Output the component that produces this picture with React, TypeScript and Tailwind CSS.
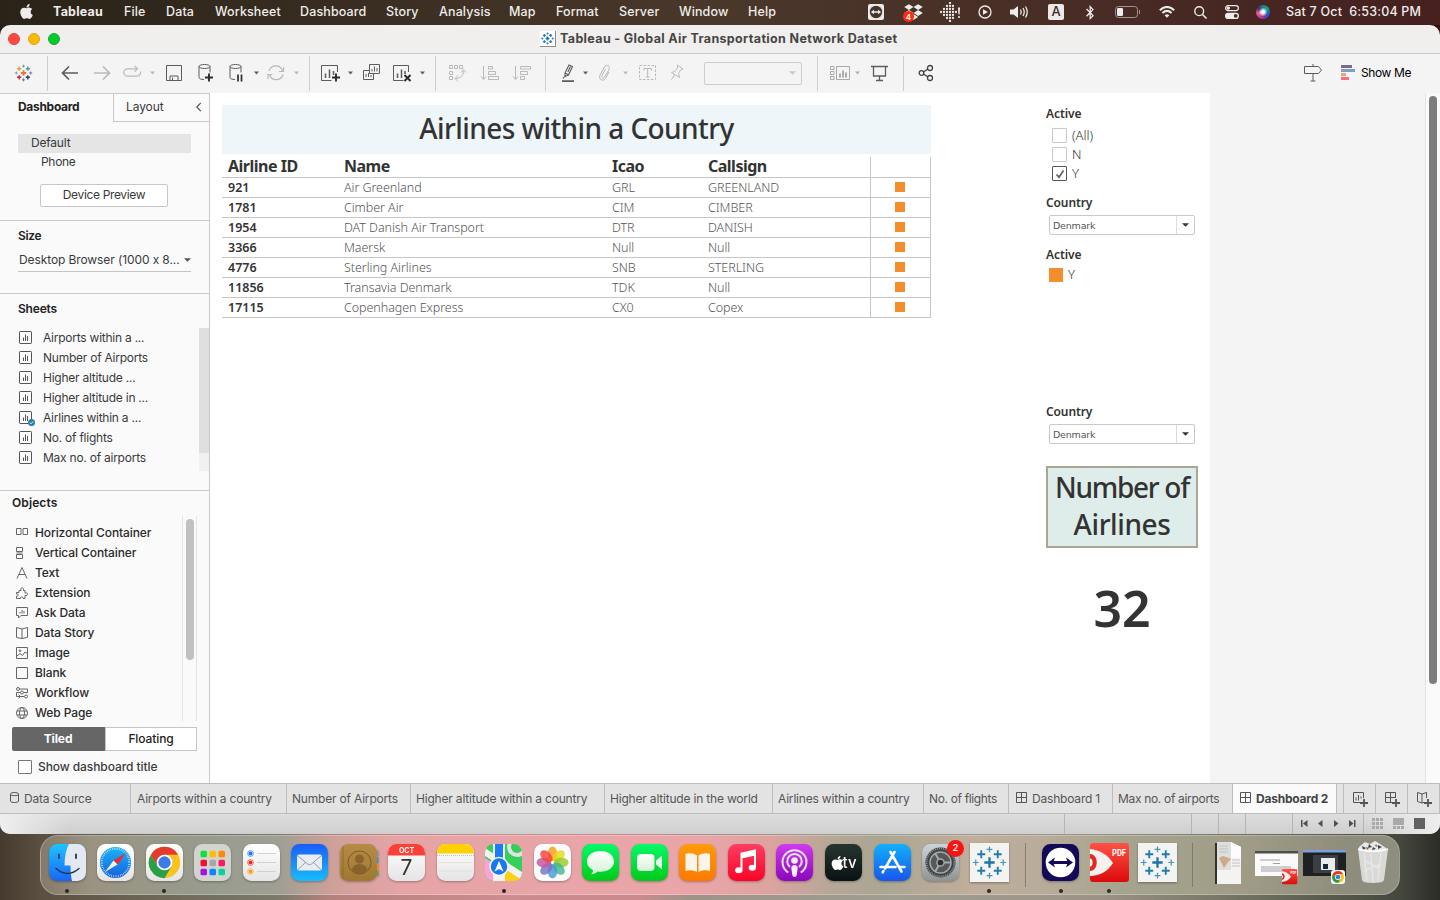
import React, { ReactNode } from "react";
import { FaApple, FaBluetoothB, FaDropbox } from "react-icons/fa";

type IconProps = { children: ReactNode; className?: string; box?: string };

function Ico({ children, className = "", box = "0 0 20 20" }: IconProps) {
  return (
    <svg
      viewBox={box}
      className={`shrink-0 overflow-visible ${className}`}
      fill="none"
      stroke="currentColor"
      strokeWidth="1"
    >
      {children}
    </svg>
  );
}

function Caret({ className }: { className: string }) {
  return (
    <svg viewBox="0 0 5 4" className={`h-1 w-[5px] shrink-0 ${className}`} fill="currentColor">
      <path d="M0 .5h5L2.5 3.5z" />
    </svg>
  );
}

const Sep = ({ className }: { className: string }) => (
  <div className={`h-[35px] w-px shrink-0 bg-[#cfcfcf] ${className}`} />
);

/* ---------- menu bar ---------- */

const menus: [string, string][] = [
  ["File", "w-[42px]"],
  ["Data", "w-[49px]"],
  ["Worksheet", "w-[85px]"],
  ["Dashboard", "w-[86px]"],
  ["Story", "w-[53px]"],
  ["Analysis", "w-[70px]"],
  ["Map", "w-[47px]"],
  ["Format", "w-[63px]"],
  ["Server", "w-[60px]"],
  ["Window", "w-[69px]"],
  ["Help", "w-[40px]"],
];

function MenuBar() {
  return (
    <div className="flex h-[25px] items-center bg-gradient-to-r from-[#2a2318] via-[#4a382b] to-[#45201f] pb-px font-['Inter',sans-serif] text-[12.5px] font-medium tracking-[0.13px] whitespace-nowrap text-[#efedeb]">
      <FaApple className="mb-[2px] ml-[19px] h-[17px] w-[15px]" />
      <span className="ml-[19px] w-[71px] font-bold tracking-[0.2px]">Tableau</span>
      {menus.map(([m, w]) => (
        <span key={m} className={`shrink-0 ${w}`}>{m}</span>
      ))}
      <svg viewBox="0 0 16 16" className="ml-20 h-4 w-4 shrink-0">
        <rect width="16" height="16" rx="2" fill="#eceae8" />
        <circle cx="8" cy="8" r="6.2" fill="#46352b" />
        <path d="M2.800 8 6 5.700v1.500h4V5.700L13.200 8 10 10.300V8.800H6v1.500z" fill="#eceae8" />
      </svg>
      <div className="relative ml-[18px] h-5 w-[22px] shrink-0">
        <FaDropbox className="absolute top-px left-[2px] h-[18px] w-[19px]" />
        <span className="absolute top-[9px] left-px flex h-[11px] w-[11px] items-center justify-center rounded-full bg-[#ff2a10] text-[8px] font-semibold text-white">
          4
        </span>
      </div>
      <svg viewBox="0 0 21 20" className="ml-4 h-5 w-[21px] shrink-0" fill="#eceae8">
        {[[1, 10], [4, 10], [4, 7], [4, 13], [7, 4], [7, 7], [7, 10], [7, 13], [7, 16], [10, 1], [10, 4], [10, 7], [10, 10], [10, 13], [10, 16], [10, 19], [13, 4], [13, 7], [13, 10], [13, 13], [13, 16], [16, 10]].map(
          ([x, y]) => <circle key={`${x}-${y}`} cx={x} cy={y} r="1.150" />,
        )}
        <path d="M18 5.500h2l-.4 7h-1.200z" />
        <circle cx="19" cy="15" r="1.100" />
      </svg>
      <Ico className="ml-[17px] h-[14px] w-[14px]" box="0 0 14 14">
        <circle cx="7" cy="7" r="6" strokeWidth="1.300" />
        <path d="M5 4.200v5.600L10 7z" fill="currentColor" stroke="none" />
      </Ico>
      <Ico className="ml-[18px] h-[14px] w-[18px]" box="0 0 18 14">
        <path d="M0 4.500h3.500L8 1v12L3.500 9.500H0z" fill="currentColor" stroke="none" />
        <path d="M10.500 4.500q1.500 2.500 0 5M13 3q2.500 4 0 8M15.500 1.500q3.500 5.500 0 11" strokeWidth="1.300" />
      </Ico>
      <span className="ml-[20px] flex h-4 w-4 shrink-0 items-center justify-center rounded-[2px] bg-[#eceae8] text-[13px] tracking-normal text-[#3f2b26]">A</span>
      <FaBluetoothB className="ml-[19px] h-[15px] w-[14px] shrink-0" />
      <Ico className="ml-[18px] h-3 w-[26px]" box="0 0 26 12">
        <rect x=".5" y=".5" width="22" height="11" rx="3" stroke="#a3948f" />
        <rect x="2" y="2" width="6" height="8" rx="1.200" fill="currentColor" stroke="none" />
        <path d="M24.500 4v4" stroke="#a3948f" />
      </Ico>
      <svg viewBox="0 0 16 12" className="ml-[18px] h-3 w-4 shrink-0" fill="none" stroke="#eceae8" strokeWidth="2">
        <path d="M.8 4.200q7.200-6.500 14.400 0M3.400 7q4.600-4.200 9.200 0" />
        <path d="M8 11.700 5.600 9.200q2.400-1.800 4.800 0z" fill="#eceae8" stroke="none" />
      </svg>
      <Ico className="ml-[19px] h-[13px] w-[13px]" box="0 0 13 13">
        <circle cx="5.200" cy="5.200" r="4.400" strokeWidth="1.400" />
        <path d="M8.500 8.500l4 4" strokeWidth="1.600" />
      </Ico>
      <Ico className="ml-[18px] h-[14px] w-[14px]" box="0 0 14 14">
        <rect x=".6" y=".6" width="12.800" height="5" rx="2.500" strokeWidth="1.200" />
        <circle cx="3.300" cy="3.100" r="1.700" fill="currentColor" stroke="none" />
        <rect x="0" y="7.700" width="14" height="6.300" rx="3.100" fill="currentColor" stroke="none" />
        <circle cx="10.700" cy="10.850" r="1.900" fill="#4a2b27" stroke="none" />
      </Ico>
      <div className="ml-[17px] h-[14px] w-[14px] shrink-0 rounded-full bg-[radial-gradient(circle_at_50%_50%,#ffffff_0_14%,transparent_45%),conic-gradient(#1f7f93,#12a58c,#1d5fb8,#5a3fc0,#d6348c,#f0608c,#4a2a80,#1f7f93)]" />
      <span className="ml-4 tracking-[0.2px] whitespace-pre">Sat 7 Oct  6:53:04 PM</span>
    </div>
  );
}

/* ---------- title bar and toolbar ---------- */

function Plus({ x, y, s, c, w = 1.2 }: { x: number; y: number; s: number; c: string; w?: number }) {
  return <path d={`M${x - s} ${y}h${2 * s}M${x} ${y - s}v${2 * s}`} stroke={c} strokeWidth={w} />;
}

function TableauMark({ colors, w = 1 }: { colors: string[]; w?: number }) {
  return (
    <g>
      <Plus x={10} y={10} s={3} c={colors[0]} w={1.5 * w} />
      <Plus x={5.2} y={5.2} s={2.3} c={colors[1]} w={1.2 * w} />
      <Plus x={14.8} y={5.2} s={2.3} c={colors[2]} w={1.2 * w} />
      <Plus x={5.2} y={14.8} s={2.3} c={colors[3]} w={1.2 * w} />
      <Plus x={14.8} y={14.8} s={2.3} c={colors[4]} w={1.2 * w} />
      <Plus x={10} y={2.4} s={1.7} c={colors[5]} w={0.8 * w} />
      <Plus x={10} y={17.6} s={1.7} c={colors[6]} w={0.8 * w} />
      <Plus x={2} y={10} s={1.7} c={colors[5]} w={0.8 * w} />
      <Plus x={18} y={10} s={1.7} c={colors[6]} w={0.8 * w} />
    </g>
  );
}

const blue = ["#1b75ab", "#2a7fb2", "#2a7fb2", "#2a7fb2", "#2a7fb2", "#2a7fb2", "#2a7fb2"];

function TitleBar() {
  return (
    <div className="flex h-[29px] shrink-0 items-center border-b border-[#cbcbcb] bg-[#f0efed]">
      <div className="ml-2 flex gap-2">
        <span className="h-3 w-3 rounded-full border border-[#e0443e] bg-[#ff4741]" />
        <span className="h-3 w-3 rounded-full border border-[#dea123] bg-[#fdb900]" />
        <span className="h-3 w-3 rounded-full border border-[#1aab29] bg-[#00cb2d]" />
      </div>
      <div className="mb-px ml-[480px] h-4 w-4 shrink-0 border-r border-b border-[#8d8d8d] bg-white p-px">
        <svg viewBox="0 0 20 20" className="h-full w-full">
          <TableauMark colors={blue} w={1.700} />
        </svg>
      </div>
      <span className="ml-1 font-['Inter',sans-serif] text-[12.5px] font-bold tracking-[0.35px] whitespace-nowrap text-[#464544]">
        Tableau - Global Air Transportation Network Dataset
      </span>
    </div>
  );
}

function Toolbar() {
  const d = "text-[#5c5c5c]";
  const l = "text-[#b9b9b9]";
  return (
    <div className="flex h-[39px] shrink-0 items-center bg-[#f4f4f4] pb-px">
      <svg viewBox="0 0 20 20" className="ml-[14px] h-[18px] w-[19px] shrink-0">
        <TableauMark colors={["#e8762d", "#eb9a3c", "#5c8ea8", "#c8203f", "#1f457e", "#7a9aa8", "#6a6a9a"]} w={1.300} />
      </svg>
      <Sep className="ml-[14px]" />
      <Ico className={`ml-3 h-5 w-5 ${d}`}>
        <path d="M18 10H3M9 3.500 2.500 10 9 16.500" strokeWidth="1.700" />
      </Ico>
      <Ico className={`ml-3 h-5 w-5 ${l}`}>
        <path d="M2 10h15M11 3.500l6.500 6.500-6.500 6.500" strokeWidth="1.700" />
      </Ico>
      <Ico className={`ml-[10px] h-5 w-5 ${l}`}>
        <path d="M15 5.800H5.500a3.700 3.700 0 0 0 0 7.400h9.500a3.700 3.700 0 0 0 3.500-4.700M12.500 2.800l3 3-3 3" strokeWidth="1.200" />
      </Ico>
      <Caret className="ml-2 text-[#b9b9b9]" />
      <Ico className={`ml-[9px] h-5 w-5 ${d}`}>
        <path d="M2.500 2.500h15v15h-15zM6 17.500v-4.500h8v4.500M8.500 17.500V14.500" />
      </Ico>
      <Ico className={`ml-3 h-5 w-5 ${d}`}>
        <ellipse cx="8.500" cy="3.500" rx="5.500" ry="2" />
        <path d="M3 3.500v11c0 1.200 2 2 5 2M14 3.500v6" />
        <path d="M9 14.500h8M13 10.500v8" stroke="#2c2c2c" strokeWidth="1.900" />
      </Ico>
      <Ico className={`ml-[10px] h-5 w-5 ${d}`}>
        <ellipse cx="9.500" cy="3.500" rx="5.500" ry="2" />
        <path d="M4 3.500v11c0 1.200 2 2 5 2M15 3.500v6" />
        <path d="M12 11.500v7M15.500 11.500v7" stroke="#2c2c2c" strokeWidth="1.700" />
      </Ico>
      <Caret className="ml-2 text-[#5c5c5c]" />
      <Ico className={`ml-[7px] h-5 w-5 ${l}`}>
        <path d="M3 8a7 7 0 0 1 13.500 0M17 11.500a7 7 0 0 1-13.500 0M17.500 4v4.500h-4.500M2 16v-4.500h4.500" strokeWidth="1.200" />
      </Ico>
      <Caret className="ml-2 text-[#b9b9b9]" />
      <Sep className="ml-[10px]" />
      <Ico className={`ml-[10px] h-5 w-5 ${d}`}>
        <path d="M17.500 9V2.500h-16v15h10" />
        <path d="M5.500 10.500v4.500M9.500 6.500v8.500M13.500 8v4" strokeWidth="1.500" />
        <path d="M12 14.500h8M16 10.500v8" stroke="#2c2c2c" strokeWidth="1.900" />
      </Ico>
      <Caret className="ml-2 text-[#5c5c5c]" />
      <Ico className={`ml-[9px] h-5 w-5 ${d}`}>
        <path d="M7.500 1.500h10v9h-10zM7 7.500H1.500v9h10v-5.500M10 8.500V6M12.500 8.500V3.500M15 8.500V5M4 14v-3M6.500 14v-4M9 14v-2" />
      </Ico>
      <Ico className={`ml-[10px] h-5 w-5 ${d}`}>
        <path d="M16.500 9V2.500h-15v15h10" />
        <path d="M5.500 10.500v4.500M9.500 6.500v8.500M13 8v3" strokeWidth="1.500" />
        <path d="M12.500 12l6 6M18.500 12l-6 6" stroke="#2c2c2c" strokeWidth="2" />
      </Ico>
      <Caret className="ml-2 text-[#5c5c5c]" />
      <Sep className="ml-[10px]" />
      <Ico className={`ml-[11px] h-5 w-5 ${l}`}>
        <path d="M2.500 2.500h3v3h-3zM7.500 2.500h3v3h-3zM12.500 2.500h3v3h-3zM2.500 8.500h3v3h-3zM2.500 13.500h3v3h-3zM16.500 8c0 5-3 7.500-8 7.500M11 12.500l-3 3 3 3M14 9.500l2.500-3 2.500 3" />
      </Ico>
      <Ico className={`ml-[13px] h-5 w-5 ${l}`}>
        <path d="M3.500 3v13M1 13.500l2.500 3 2.500-3M8.500 3.500h4v2.500h-4zM8.500 8.500h7v3h-7zM8.500 13.500h10v3h-10z" />
      </Ico>
      <Ico className={`ml-3 h-5 w-5 ${l}`}>
        <path d="M3.500 3v13M1 13.500l2.500 3 2.500-3M8.500 3.500h10v2.500h-10zM8.500 8.500h7v3h-7zM8.500 13.500h4v3h-4z" />
      </Ico>
      <Sep className="ml-[13px]" />
      <Ico className={`ml-3 h-5 w-5 ${d}`}>
        <path d="M7 10l4-8 3.500 1.500-4 8.500-3.500 1.500zM6.500 13.500 5 15.500M7 10l4 2M9.800 9l2.700-5.500" strokeWidth="1.100" />
        <path d="M4 18.200h12" strokeWidth="1.800" />
      </Ico>
      <Caret className="ml-[5px] text-[#5c5c5c]" />
      <Ico className={`ml-[7px] h-5 w-5 ${l}`}>
        <path d="M10.500 6 7 12.500c-1 2.500 1.500 3.500 2.800 1.500L14 6.500c1.500-3.500-2.500-5.500-4.500-2.500L5 12c-2 4.500 3 7 5.500 3.500L14 9" />
      </Ico>
      <Caret className="ml-2 text-[#b9b9b9]" />
      <Ico className={`ml-[10px] h-5 w-5 ${l}`}>
        <rect x="1.500" y="2.500" width="16" height="14" strokeDasharray="2.500 1.500" />
        <path d="M6 7.500V5.500h7.500v2M9.700 5.500v8.500M8 14h3.500" />
      </Ico>
      <Ico className={`ml-[9px] h-5 w-5 ${l}`}>
        <path d="M10.500 2l5.500 4-2.500 1-2 3.500 1 4-8-5 3-1 3-3.500zM7.500 12 4.500 16.500" />
      </Ico>
      <div className="ml-[17px] flex h-[23px] w-[98px] shrink-0 items-center justify-end rounded-[2px] border border-[#cdcdcd] pr-[5px]">
        <svg viewBox="0 0 8 4" className="h-1 w-[7px]" fill="#c8c8c8"><path d="M0 0h8L4 4z" /></svg>
      </div>
      <Sep className="ml-[15px]" />
      <Ico className="ml-3 h-5 w-5 text-[#a9a9a9]">
        <path d="M.5 3.500h3.500v3H.5zM.5 8.500h3.500v3H.5zM.5 13.500h3.500v3H.5zM6.500 3.500h13v13h-13z" />
        <path d="M10 10.500v4M13 7.500v7M16 9.500v5" strokeWidth="1.900" />
      </Ico>
      <Caret className="ml-[5px] text-[#b0b0b0]" />
      <Ico className={`ml-[10px] h-5 w-5 ${d}`}>
        <path d="M1 3.500h17M3.500 4v9h12V4M9.500 13v4.500M6 17.500h7" strokeWidth="1.300" />
      </Ico>
      <Sep className="ml-[13px]" />
      <Ico className="ml-3 h-5 w-5 text-[#444]">
        <circle cx="5.500" cy="10" r="2.300" strokeWidth="1.300" />
        <circle cx="14" cy="5" r="2.500" strokeWidth="1.300" />
        <circle cx="14" cy="15" r="2.500" strokeWidth="1.300" />
        <path d="M7.500 9l4.500-3M7.500 11l4.500 3" strokeWidth="1.300" />
      </Ico>
      <Ico className={`ml-auto h-5 w-5 ${d}`}>
        <path d="M1.500 3.500h14l3 3.500-3 3.500h-14zM10 1v2.500M10 10.500V18M7.500 18h5" />
      </Ico>
      <svg viewBox="0 0 14 16" className="ml-[18px] h-4 w-[14px] shrink-0">
        <path d="M0 0h11v3H0z" fill="#7b6a94" />
        <path d="M0 4h14v3H0z" fill="#7ba0cc" />
        <path d="M0 8h5v3H0z" fill="#f2a07c" />
        <path d="M0 12h8v3H0z" fill="#fa6b7d" />
      </svg>
      <span className="mr-7 ml-1.5 w-[51px] shrink-0 font-['Inter',sans-serif] text-[12px] tracking-[-0.4px] whitespace-nowrap text-black">Show Me</span>
    </div>
  );
}

/* ---------- sidebar ---------- */

const sheets = [
  "Airports within a ...",
  "Number of Airports",
  "Higher altitude ...",
  "Higher altitude in ...",
  "Airlines within a ...",
  "No. of flights",
  "Max no. of airports",
];

const objects: [string, ReactNode][] = [
  ["Horizontal Container", <path d="M.5 1.500h4.500v6H.5zM7 1.500h4.500v6H7z" />],
  ["Vertical Container", <path d="M.5.500h6v4h-6zM.5 7.500h6v4h-6zM.5 6h6" />],
  ["Text", <path d="M1 11.500 6 .5l5 11M2.800 7.500h6.400" />],
  ["Extension", <path d="M.5 5.500H3V3.500h2C4-.3 8.300-.3 7.300 3.500H9v2.500c3.500-1 3.500 3.500 0 2.500v3H7c0-2.300-2.500-2.300-2.500 0h-4V9c2.500.5 2.500-2.500 0-2z" />],
  ["Ask Data", <path d="M.5.500h11v8H5L2.500 11V8.500h-2zM4 6.500V5M6 6.500V3M8 6.500V4" />],
  ["Data Story", <path d="M6 2 .5.500v10L6 11.500l5.500-1V.500zM6 2v9.500" />],
  ["Image", <g><path d="M.5.500h11v11H.5zM1 9l3-2.500 2.500 2L9 5l2.500 1.500" /><circle cx="4" cy="3.700" r=".9" /></g>],
  ["Blank", <path d="M.5.500h11v11H.5z" />],
  ["Workflow", <g><circle cx="2" cy="2" r="1.500" /><circle cx="10" cy="9.500" r="1.500" /><circle cx="6" cy="5.500" r="1.500" /><path d="M3.500 2h8v3.500h-4M4.500 5.500h-4v4H8M2.500 7.500l2 2-2 2" /></g>],
  ["Web Page", <g><circle cx="6" cy="6" r="5.500" /><ellipse cx="6" cy="6" rx="2.500" ry="5.500" /><path d="M1 4h10M1 8h10" /></g>],
];

function Sidebar() {
  return (
    <aside className="flex w-[210px] shrink-0 flex-col border-t border-r border-[#c9c9c9] bg-[#fafafa] font-['Inter',sans-serif] text-[12px] tracking-[-0.1px] whitespace-nowrap text-[#3a3a3a]">
      <div className="flex h-7 shrink-0">
        <div className="w-[113px] pt-[5px] pl-[18px] leading-4 font-bold tracking-[-0.3px] text-[#222]">Dashboard</div>
        <div className="flex flex-1 justify-between border-b border-l border-[#c9c9c9] pt-[5px] pr-2 pl-3 leading-4">
          <span>Layout</span>
          <Ico className="mt-[3px] h-[10px] w-[5px] text-[#555]" box="0 0 5 10">
            <path d="M4.800.800.800 5l4 4.200" strokeWidth="1.200" />
          </Ico>
        </div>
      </div>
      <div className="mt-3 ml-[18px] h-[19px] w-[173px] shrink-0 bg-[#e5e5e5] pl-[13px] leading-[18px] tracking-[-0.2px]">Default</div>
      <div className="h-[19px] shrink-0 pl-[41px] leading-[18px] tracking-[-0.3px]">Phone</div>
      <button className="mt-3 ml-10 flex h-[23px] w-32 shrink-0 items-center justify-center rounded-[2px] border border-[#c6c6c6] bg-white pb-[2px] tracking-[-0.35px]">
        Device Preview
      </button>
      <div className="mt-[13px] h-[73px] shrink-0 border-t border-[#c9c9c9] pt-[7px] pl-[18px]">
        <div className="leading-4 font-semibold tracking-[-0.3px] text-[#222]">Size</div>
        <div className="mt-[6px] flex h-[22px] w-[173px] items-center justify-between border-b border-[#c6c6c6] pb-[2px] pl-px">
          <span>Desktop Browser (1000 x 8...</span>
          <svg viewBox="0 0 8 4" className="h-1 w-[7px]" fill="#555"><path d="M0 0h8L4 4z" /></svg>
        </div>
      </div>
      <div className="h-[197px] shrink-0 border-t border-[#c9c9c9] pt-[7px]">
        <div className="pl-[18px] leading-4 font-semibold tracking-[-0.2px] text-[#222]">Sheets</div>
        <div className="mt-[11px] flex justify-between">
          <div className="pl-[19px]">
            {sheets.map((s, i) => (
              <div key={s} className="flex h-5 items-center gap-[11px]">
                <div className="relative mb-px h-[13px] w-[13px]">
                  <Ico className="block h-[13px] w-[13px] text-[#555]" box="0 0 13 13">
                    <rect x=".5" y=".5" width="12" height="12" rx=".7" />
                    <path d="M4.500 6.500V10M6.500 3.500V10M8.500 5V10" />
                  </Ico>
                  {i === 4 && (
                    <svg viewBox="0 0 8 8" className="absolute top-2 left-[9px] h-[7px] w-[7px]">
                      <circle cx="4" cy="4" r="4" fill="#2a7fa8" />
                      <path d="M2 4l1.500 1.500L6 2.800" fill="none" stroke="#fff" />
                    </svg>
                  )}
                </div>
                <span className="tracking-[-0.24px]">{s}</span>
              </div>
            ))}
          </div>
          <div className="h-[143px] w-[10px] bg-[#f1f1f1]">
            <div className="h-[125px] bg-[#dfdfdf]" />
          </div>
        </div>
      </div>
      <div className="flex-1 border-t border-[#c9c9c9] pt-1">
        <div className="pl-3 leading-4 font-semibold tracking-[0.1px] text-[#222]">Objects</div>
        <div className="mt-[5px] flex h-[205px] justify-between pr-3 font-medium tracking-[-0.1px]">
          <div className="pt-[7px] pl-4">
            {objects.map(([name, icon]) => (
              <div key={name} className="flex h-5 items-center gap-[7px]">
                <Ico className="h-3 w-3 text-[#666]" box="0 0 12 12">{icon}</Ico>
                <span className="text-[#2b2b2b]">{name}</span>
              </div>
            ))}
          </div>
          <div className="flex w-[15px] justify-center border-x border-[#e4e4e4] pt-[3px]">
            <div className="h-[141px] w-2 rounded-full bg-[#c1c1c1]" />
          </div>
        </div>
        <div className="mt-[6px] ml-3 flex h-6 w-[185px] font-medium">
          <div className="flex w-[93px] items-center justify-center rounded-l-[2px] bg-[#666] pr-px font-bold text-white">Tiled</div>
          <div className="flex flex-1 items-center justify-center border border-[#c6c6c6] bg-white text-[#222]">Floating</div>
        </div>
        <div className="mt-2 ml-[18px] flex items-center gap-[6px] font-medium tracking-[-0.08px]">
          <span className="h-[14px] w-[14px] rounded-[1px] border border-[#777] bg-white" />
          <span className="leading-4">Show dashboard title</span>
        </div>
      </div>
    </aside>
  );
}

/* ---------- dashboard ---------- */

const rows = [
  ["921", "Air Greenland", "GRL", "GREENLAND"],
  ["1781", "Cimber Air", "CIM", "CIMBER"],
  ["1954", "DAT Danish Air Transport", "DTR", "DANISH"],
  ["3366", "Maersk", "Null", "Null"],
  ["4776", "Sterling Airlines", "SNB", "STERLING"],
  ["11856", "Transavia Denmark", "TDK", "Null"],
  ["17115", "Copenhagen Express", "CX0", "Copex"],
];

function AirlineTable() {
  return (
    <section className="w-[709px]">
      <h1 className="flex h-[49px] items-center justify-center bg-[#eef6fa] pb-1 text-[28px] font-medium tracking-[-0.58px] text-[#333]">
        Airlines within a Country
      </h1>
      <div className="grid h-6 grid-cols-[122px_268px_96px_162px_61px] border-b border-[#c6c6c6] text-[16px] leading-[25px] font-bold tracking-[-0.5px] text-[#333]">
        <span className="pl-1.5">Airline ID</span>
        <span>Name</span>
        <span>Icao</span>
        <span>Callsign</span>
        <span className="mt-[3px] border-x border-[#c6c6c6]" />
      </div>
      {rows.map((r) => (
        <div key={r[0]} className="grid h-5 grid-cols-[122px_268px_96px_162px_61px] border-b border-[#c6c6c6] text-[12.5px] leading-[19px] font-light tracking-[-0.05px] text-[#555]">
          <span className="pl-1.5 font-semibold tracking-[-0.02px] text-[#333]">{r[0]}</span>
          <span>{r[1]}</span>
          <span>{r[2]}</span>
          <span>{r[3]}</span>
          <span className="flex items-center justify-center border-x border-[#c6c6c6] pr-px pb-px">
            <i className="h-[10px] w-[10px] bg-[#f28e2b]" />
          </span>
        </div>
      ))}
    </section>
  );
}

function CountryFilter() {
  return (
    <div className="ml-[3px] flex h-5 w-[146px] rounded-[2px] border border-[#c9c9c9] bg-white">
      <span className="flex-1 pl-[3px] font-['DejaVu_Sans','Noto_Sans',sans-serif] text-[9.5px] leading-[19px] tracking-[-0.2px] text-[#555]">Denmark</span>
      <span className="flex w-[18px] items-center justify-center border-l border-[#dcdcdc]">
        <svg viewBox="0 0 8 4" className="h-1 w-[7px]" fill="#333"><path d="M0 0h8L4 4z" /></svg>
      </span>
    </div>
  );
}

function CheckRow({ label, on }: { label: string; on?: boolean }) {
  return (
    <div className="flex h-[19px] items-center pl-1.5">
      <span className={`flex h-[15px] w-[15px] items-center justify-center rounded-[1px] border ${on ? "border-[#555]" : "border-[#c9c9c9]"}`}>
        {on && (
          <svg viewBox="0 0 10 10" className="h-[10px] w-[10px]" fill="none" stroke="#666" strokeWidth="1.800">
            <path d="M1.500 5.500 4 8.200 8.500 1.500" />
          </svg>
        )}
      </span>
      <span className="mt-px ml-[5px] text-[13px] font-light text-[#333]">{label}</span>
    </div>
  );
}

const heading = "text-[12px] leading-4 font-semibold tracking-[-0.1px] text-[#333]";

function FilterPanel() {
  return (
    <section className="w-[152px] pt-px">
      <h2 className={heading}>Active</h2>
      <div className="mt-1">
        <CheckRow label="(All)" />
        <CheckRow label="N" />
        <CheckRow label="Y" on />
      </div>
      <h2 className={`mt-3 ${heading}`}>Country</h2>
      <div className="mt-1"><CountryFilter /></div>
      <h2 className={`mt-3 ${heading}`}>Active</h2>
      <div className="mt-1 ml-[3px] flex h-4 items-center gap-[5px] text-[13px] font-light text-[#333]">
        <i className="h-[14px] w-[14px] bg-[#f28e2b]" />
        <span>Y</span>
      </div>
      <h2 className={`mt-[121px] ${heading}`}>Country</h2>
      <div className="mt-1"><CountryFilter /></div>
      <div className="mt-[22px] flex h-[82px] flex-col items-center justify-center border-2 border-[#a9a794] bg-[#deedea] pb-[3px] text-[28px] leading-[37px] font-medium text-[#333]">
        <span className="tracking-[-1.3px]">Number of</span>
        <span className="tracking-[-0.4px]">Airlines</span>
      </div>
      <div className="mt-[25px] text-center text-[50px] leading-[70px] font-semibold text-[#333]">32</div>
    </section>
  );
}

/* ---------- sheet tabs and status bar ---------- */

function GridGlyph() {
  return (
    <Ico className="mb-[2px] h-[11px] w-[11px] text-[#555]" box="0 0 11 11">
      <path d="M.5.500h10v10H.5zM5.500.500v10M.5 5.500h10" />
    </Ico>
  );
}

const tabs: { label: string; w: string; grid?: boolean }[] = [
  { label: "Airports within a country", w: "w-[156px] pl-1.5" },
  { label: "Number of Airports", w: "w-[124px] pl-[5px]" },
  { label: "Higher altitude within a country", w: "w-[194px] pl-[5px]" },
  { label: "Higher altitude in the world", w: "w-[168px] pl-[5px]" },
  { label: "Airlines within a country", w: "w-[151px] pl-[5px]" },
  { label: "No. of flights", w: "w-[85px] pl-[5px] tracking-[-0.35px]" },
  { label: "Dashboard 1", w: "w-[104px] pl-[7px]", grid: true },
  { label: "Max no. of airports", w: "w-[120px] pl-[5px] tracking-[-0.32px]" },
];

function SheetTabs() {
  return (
    <div className="flex h-[31px] shrink-0 border-y border-[#bdbdbd] bg-[#e3e3e3] font-['Inter',sans-serif] text-[12px] tracking-[-0.19px] whitespace-nowrap text-[#555]">
      <div className="flex w-[131px] shrink-0 items-center gap-[5px] border-r border-[#bdbdbd] pl-[10px]">
        <Ico className="mb-[2px] h-[11px] w-[9px]" box="0 0 9 11">
          <path d="M.5 2C.5 0 8.500 0 8.500 2v7c0 2-8 2-8 0zM.5 2.500c0 1.500 8 1.500 8 0" />
        </Ico>
        Data Source
      </div>
      {tabs.map((t) => (
        <div key={t.label} className={`flex shrink-0 items-center gap-[5px] border-r border-[#bdbdbd] ${t.w}`}>
          {t.grid && <GridGlyph />}
          {t.label}
        </div>
      ))}
      <div className="flex w-[104px] shrink-0 items-center gap-[5px] border-r border-[#bdbdbd] bg-[#fafafa] pl-[7px] font-bold tracking-[-0.22px] text-[#444]">
        <GridGlyph />
        Dashboard 2
      </div>
      <div className="w-[7px] shrink-0 border-r border-[#bdbdbd]" />
      {[
        "M10.500 6V.500H.5v10h7M3 5.500v3M5.500 3v5.500M8 4.500v2",
        "M10.500 6V.500H.5v10h7M5.500.500v10M.5 5.500h10",
        "M5 2 .5.500v9L5 11V2l4.500-1.500V6M5 11l2-.6",
      ].map((d) => (
        <div key={d} className="flex w-8 shrink-0 items-center border-r border-[#bdbdbd] pl-[9px]">
          <Ico className="h-[14px] w-[14px]" box="0 0 14 14">
            <path d={d} />
            <path d="M7 11h8M11 7v8" strokeWidth="1.800" />
          </Ico>
        </div>
      ))}
    </div>
  );
}

function StatusBar() {
  const cell = "shrink-0 border-r border-[#b5b5b5]";
  return (
    <div className="flex h-5 shrink-0 bg-[linear-gradient(90deg,#eeeeee_0,transparent_70px,transparent_1370px,#eee_1440px),linear-gradient(#dedede,#cecece)]">
      <div className={`w-[1065px] ${cell}`} />
      <div className={`w-[127px] ${cell}`} />
      <div className={`w-[27px] ${cell}`} />
      <div className={`w-[27px] ${cell}`} />
      <div className={`w-[47px] ${cell}`} />
      <svg viewBox="0 0 70 20" className="h-5 w-[70px] shrink-0" fill="#4f4f4f">
        <path d="M8 6h1.500v7H8zM14.500 6v7L10 9.500zM29.500 6v7L25 9.500zM41 6v7l4.500-3.500zM56 6v7l4.500-3.500zM61 6h1.500v7H61z" />
      </svg>
      <div className={`w-px ${cell}`} />
      <svg viewBox="0 0 76 20" className="h-5 w-[76px] shrink-0" fill="#a9a9a9">
        {[0, 4, 8].map((x) => [0, 4, 8].map((y) => <rect key={`${x}${y}`} x={8 + x} y={4 + y} width="3" height="3" />))}
        <path d="M29 4h11v7H29zM29 12h3v3h-3zM33 12h3v3h-3zM37 12h3v3h-3z" />
        <path d="M50 4h11v11H50z" fill="#616161" />
      </svg>
    </div>
  );
}

/* ---------- dock ---------- */

function Tile({ bg, children }: { bg: string; children?: ReactNode }) {
  return (
    <svg viewBox="0 0 37 37" className="h-[37px] w-[37px] shrink-0 overflow-visible drop-shadow-[0_1px_1px_rgba(0,0,0,0.3)]">
      <rect width="37" height="37" rx="8.500" fill={bg} />
      {children}
    </svg>
  );
}

function ChromeDisc({ x, y, r }: { x: number; y: number; r: number }) {
  const k = r / 16;
  return (
    <g transform={`translate(${x} ${y}) scale(${k})`}>
      <circle r="16" fill="#fcc31e" />
      <path d="M-13.860-8A16 16 0 0 1 13.860-8H0L-7 4z" fill="#e33b2e" />
      <path d="M-13.860-8A16 16 0 0 0 0 16L7 4H-7z" fill="#2a9f4b" />
      <circle r="8" fill="#fff" />
      <circle r="6.300" fill="#3b7de8" />
    </g>
  );
}

function TableauTile() {
  return (
    <svg viewBox="0 0 39 39" className="h-[39px] w-[39px] shrink-0 drop-shadow-[0_1px_1px_rgba(0,0,0,0.35)]">
      <rect width="39" height="39" fill="#f3f3f2" />
      <g transform="translate(2.300 2.300) scale(1.720)">
        <TableauMark colors={["#1b75ab", "#1f7cae", "#1f7cae", "#1f7cae", "#1f7cae", "#4a94bc", "#4a94bc"]} w={0.9} />
      </g>
    </svg>
  );
}

function PdfArt() {
  return (
    <g>
      <rect width="39" height="39" rx="3" fill="url(#pdf)" />
      <path d="M0 6c10 1 18 6 23 14-5 8-13 13-23 13z" fill="#f5efee" />
      <path d="M0 11c9 0 9 17 0 17z" fill="#e22a22" />
      <path d="M0 15.500c3.500 0 3.500 8 0 8z" fill="#f5efee" />
      <text x="22" y="12.500" fontSize="9.500" fontWeight="700" fill="#fff" textLength="14" lengthAdjust="spacingAndGlyphs" fontFamily="Roboto, sans-serif">PDF</text>
    </g>
  );
}

function Defs() {
  const g = (id: string, a: string, b: string) => (
    <linearGradient id={id} x1="0" y1="0" x2="0" y2="1">
      <stop offset="0" stopColor={a} />
      <stop offset="1" stopColor={b} />
    </linearGradient>
  );
  return (
    <svg className="h-0 w-0 shrink-0">
      <defs>
        {g("finder", "#1fc3ff", "#1766f5")}
        {g("white", "#ffffff", "#e4e4e6")}
        {g("safari", "#1bb4f8", "#1560de")}
        {g("mail", "#1a5cf8", "#19bdfd")}
        {g("green", "#04f968", "#03c919")}
        {g("books", "#ff9b09", "#fc7a02")}
        {g("music", "#fc3f63", "#fb0326")}
        {g("pod", "#cf3bee", "#8a07bb")}
        {g("tv", "#26352f", "#0b1214")}
        {g("store", "#12b0fb", "#1a56ea")}
        {g("gear", "#c9d5da", "#8f9493")}
        {g("brown", "#b68b45", "#a07732")}
        {g("pdf", "#ff5147", "#dc0b0b")}
        {g("bubble", "#ffffff", "#d3f3d6")}
      </defs>
    </svg>
  );
}

const petals = ["#f79c1a", "#e6d817", "#97cb2e", "#3fb888", "#469bd6", "#7c6fc4", "#c4539c", "#f4433c"];
const launch = ["#12e03b", "#fdbe00", "#ff8a00", "#f0102f", "#a3a8ab", "#fb1a5c", "#a913e0", "#0a87f8", "#0bd0a0"];

const apps: { art: ReactNode; dot?: boolean }[] = [
  {
    dot: true,
    art: (
      <Tile bg="url(#finder)">
        <path d="M20 0h8.500A8.500 8.500 0 0 1 37 8.500v20A8.500 8.500 0 0 1 28.500 37H23q-1.500-6-1.500-15.500H15.500Q15.500 8 20 0z" fill="#e3e8f2" />
        <path d="M7 24.500q11.500 10 23 0" fill="none" stroke="#1b3550" strokeWidth="1.400" strokeLinecap="round" />
        <path d="M10 10.500v3.500M27 10.500v3.500" stroke="#1b3550" strokeWidth="1.800" strokeLinecap="round" />
      </Tile>
    ),
  },
  {
    art: (
      <Tile bg="url(#white)">
        <circle cx="18.500" cy="18.500" r="15.500" fill="url(#safari)" />
        <circle cx="18.500" cy="18.500" r="13.800" fill="none" stroke="#d5ecfc" strokeWidth="2" strokeDasharray=".6 1.200" />
        <path d="M29 9 20.500 20.500 16.500 16.500z" fill="#f02b2b" />
        <path d="M8 28l8.500-11.500 4 4z" fill="#f4f4f4" />
      </Tile>
    ),
  },
  { dot: true, art: <Tile bg="url(#white)"><ChromeDisc x={18.5} y={18.5} r={15.7} /></Tile> },
  {
    art: (
      <Tile bg="#d2d4cf">
        {launch.map((c, i) => (
          <rect key={c} x={6.500 + (i % 3) * 9} y={6.800 + Math.floor(i / 3) * 9} width="6.500" height="6.500" rx="1.500" fill={c} />
        ))}
      </Tile>
    ),
  },
  {
    art: (
      <Tile bg="url(#white)">
        {["#1f78f0", "#f0281e", "#f59a1c"].map((c, i) => (
          <g key={c}>
            <circle cx="7.500" cy={9.500 + i * 9} r="2.900" fill="#fff" stroke={c} strokeWidth=".7" />
            <circle cx="7.500" cy={9.500 + i * 9} r="2" fill={c} />
            <path d={`M14 ${9.500 + i * 9}h19`} stroke="#c9c9cb" strokeWidth=".8" />
          </g>
        ))}
      </Tile>
    ),
  },
  {
    art: (
      <Tile bg="url(#mail)">
        <rect x="6" y="10.500" width="25" height="16" rx="2" fill="#e9edf2" />
        <path d="M6.500 11.500l10 8.500q2 1.500 4 0l10-8.500M6.500 26l8.500-8M30.500 26 22 18" fill="none" stroke="#8e9cae" strokeWidth="1" />
      </Tile>
    ),
  },
  {
    art: (
      <Tile bg="url(#brown)">
        <path d="M37 6.500h1.500v5H37z" fill="#8b939b" />
        <path d="M37 13h1.500v6H37z" fill="#3098dc" />
        <path d="M37 20h1.500v6H37z" fill="#f08a1c" />
        <path d="M37 27h1.500v5H37z" fill="#36b44a" />
        <path d="M3 2v33" stroke="#8a652b" strokeWidth=".8" />
        <g stroke="#7d5a26" fill="none"><circle cx="19.500" cy="18.500" r="11.500" /></g>
        <circle cx="19.500" cy="15" r="4.500" fill="#7d5a26" opacity=".75" />
        <path d="M11.500 26q2-6 8-6t8 6q-8 7-16 0z" fill="#7d5a26" opacity=".75" />
      </Tile>
    ),
  },
  {
    art: (
      <Tile bg="url(#white)">
        <path d="M0 11.500v-3A8.500 8.500 0 0 1 8.500 0h20A8.500 8.500 0 0 1 37 8.500v3z" fill="#fb4038" />
        <text x="18.500" y="9" textAnchor="middle" fontSize="7" fontWeight="700" fill="#fff" fontFamily="Inter, sans-serif">OCT</text>
        <text x="18.500" y="31" textAnchor="middle" fontSize="21" fill="#333" fontFamily="Inter, sans-serif">7</text>
      </Tile>
    ),
  },
  {
    art: (
      <Tile bg="url(#white)">
        <path d="M0 9.500v-1A8.500 8.500 0 0 1 8.500 0h20A8.500 8.500 0 0 1 37 8.500v1z" fill="#fdd106" />
        <path d="M0 11.500h37" stroke="#c6bfae" strokeDasharray="1 1" />
        <path d="M1 18.500h35M1 27h35" stroke="#dcdcd8" strokeWidth=".7" />
      </Tile>
    ),
  },
  {
    dot: true,
    art: (
      <svg viewBox="0 0 37 37" className="h-[37px] w-[37px] shrink-0">
        <defs><clipPath id="mapclip"><rect width="37" height="37" rx="8.500" /></clipPath></defs>
        <g clipPath="url(#mapclip)">
          <rect width="37" height="37" fill="#35cf5c" />
          <path d="M0 14 37 37H0z" fill="#f6a5d5" />
          <path d="M20 24 37 34v3H17z" fill="#fcd115" />
          <path d="M0 4 37 28v8L0 12z" fill="#f2f2ee" />
          <path d="M8 0h12v37H8z" fill="#f2f2ee" />
          <path d="M10 0h8v20h-8z" fill="#1c7cf4" />
          <circle cx="32" cy="3" r="8" fill="none" stroke="#dfe3e1" strokeWidth="4" />
          <circle cx="14" cy="22.500" r="9" fill="#1778f2" stroke="#f5f5f5" strokeWidth="1.500" />
          <path d="M14 17l4.500 10.500L14 25l-4.500 2.500z" fill="#fff" />
        </g>
      </svg>
    ),
  },
  {
    art: (
      <Tile bg="#fcfcfc">
        {petals.map((c, i) => (
          <ellipse key={c} cx="18.500" cy="9.800" rx="4.800" ry="7.300" fill={c} opacity=".82" transform={`rotate(${i * 45} 18.500 18.500)`} />
        ))}
      </Tile>
    ),
  },
  {
    art: (
      <Tile bg="url(#green)">
        <path d="M18.500 7C10.500 7 5 11.500 5 17.500c0 4 2.200 6.800 6 8.500 0 1.800-.6 3-2 4.200 2.800 0 5-1 6.300-2.800 1 .2 2 .3 3.200.3 8 0 13.500-4.300 13.500-10.200S26.500 7 18.500 7z" fill="url(#bubble)" />
      </Tile>
    ),
  },
  {
    art: (
      <Tile bg="url(#green)">
        <rect x="6" y="10" width="17.500" height="17" rx="4" fill="url(#bubble)" />
        <path d="M25 16.500l6-5v14l-6-5z" fill="#e6fae8" />
      </Tile>
    ),
  },
  {
    art: (
      <Tile bg="url(#books)">
        <path d="M18 11.500C15 9 9.500 8.500 6.500 10v17c3-1.500 8.500-1 11.500 1zM19.500 11.500c3-2.500 8.500-3 11.500-1.500v17c-3-1.500-8.500-1-11.500 1z" fill="#fbf4ea" />
      </Tile>
    ),
  },
  {
    art: (
      <Tile bg="url(#music)">
        <path d="M13.500 25.500V9.500L27 6.500v16.500M13.500 13.500 27 10.500" fill="none" stroke="#fff" strokeWidth="2" />
        <path d="M13.500 9.500 27 6.500v4l-13.500 3z" fill="#fff" />
        <ellipse cx="10.800" cy="26.300" rx="3.700" ry="3" fill="#fff" />
        <ellipse cx="24.300" cy="23.800" rx="3.700" ry="3" fill="#fff" />
      </Tile>
    ),
  },
  {
    art: (
      <Tile bg="url(#pod)">
        <path d="M12.300 28.500a12 12 0 1 1 12.400 0M14 23a7.300 7.300 0 1 1 9 0" fill="none" stroke="#f4e4fa" strokeWidth="2" />
        <circle cx="18.500" cy="16.500" r="3.300" fill="#f9f0fc" />
        <path d="M15.300 24c0-4 6.400-4 6.400 0l-1 7c-.4 2.500-4 2.500-4.400 0z" fill="#f9f0fc" />
      </Tile>
    ),
  },
  {
    art: (
      <Tile bg="url(#tv)">
        <FaApple x="4.500" y="11" width="12.500" height="12.500" color="#fff" />
        <text x="17.500" y="23.500" fontSize="15" fontWeight="500" fill="#fff" fontFamily="Inter, sans-serif" textLength="14" lengthAdjust="spacingAndGlyphs">tv</text>
      </Tile>
    ),
  },
  {
    art: (
      <Tile bg="url(#store)">
        <path d="M20.500 8 11 24.500M16.500 8 27.500 27.500M6.500 23h15M25.500 23h5M9.500 27l-.8 1.300" stroke="#fff" strokeWidth="2.600" strokeLinecap="round" />
      </Tile>
    ),
  },
  {
    art: (
      <div className="relative h-[37px]">
        <Tile bg="url(#gear)">
          <circle cx="18.500" cy="18.500" r="15" fill="#3f4242" />
          <circle cx="18.500" cy="18.500" r="14" fill="none" stroke="#8c9090" strokeWidth="2" strokeDasharray="1 1" />
          <circle cx="18.500" cy="18.500" r="10.500" fill="#55595a" stroke="#a5a9a9" strokeWidth="1.500" />
          <circle cx="18.500" cy="18.500" r="3.600" fill="#303232" stroke="#a5a9a9" strokeWidth="1.500" />
          <path d="M22 18.500h7M16.700 15.500l-3.500-6M16.700 21.500l-3.500 6" stroke="#a5a9a9" strokeWidth="2" />
        </Tile>
        <span className="absolute -top-1 left-[25px] flex h-[17px] w-[17px] items-center justify-center rounded-full bg-[#fb1311] font-['Inter',sans-serif] text-[9.5px] font-medium text-white">2</span>
      </div>
    ),
  },
  { dot: true, art: <TableauTile /> },
];

const recent: { art: ReactNode; dot?: boolean }[] = [
  {
    dot: true,
    art: (
      <Tile bg="#120a56">
        <circle cx="18.500" cy="18.500" r="14.800" fill="#fff" />
        <path d="M6 18.500l7-5-1.200 3.600h13.400L24 13.500l7 5-7 5 1.200-3.600H11.800L13 23.500z" fill="#120a56" />
      </Tile>
    ),
  },
  { dot: true, art: <svg viewBox="0 0 39 39" className="h-[39px] w-[39px]"><PdfArt /></svg> },
  { art: <TableauTile /> },
];

const files: ReactNode[] = [
  <svg viewBox="0 0 28 44" className="h-11 w-7">
    <path d="M1 2h4v41H1z" fill="#303030" />
    <path d="M3 1h14l10 5v37H3z" fill="#f3f3f2" />
    <path d="M3 1h14v28H3z" fill="#dededc" />
    <path d="M17 1l10 5v11H17z" fill="#fcfcfc" />
    <path d="M5 17l4-2 3 1 5 2-3 3-4 6-3-6z" fill="#cfa98b" />
    <path d="M5 5h9M5 8h9M5 11h9M18 19h8M18 22h8M18 25h8" stroke="#c2c2c2" />
  </svg>,
  <svg viewBox="0 0 43 44" className="h-11 w-[43px] overflow-visible">
    <path d="M0 11h43v24H0z" fill="#fafafa" />
    <path d="M0 10h43v2.500H0z" fill="#4b504b" />
    <path d="M5 19h20M18 22.500h7M6 26h30M6 28h30M6 30h22" stroke="#8a8a8a" strokeWidth=".8" />
    <g transform="translate(27 28) scale(.39)"><PdfArt /></g>
  </svg>,
  <svg viewBox="0 0 43 44" className="h-11 w-[43px] overflow-visible">
    <path d="M0 9h43v26H0z" fill="#1e2022" />
    <path d="M0 9h43v2.500H0z" fill="#7c9fe0" />
    <path d="M10 14h25v18H10z" fill="#3b3e42" />
    <path d="M18 17h14v12H18z" fill="#e9eaec" />
    <path d="M20 23h5v5h-5z" fill="#18253c" />
    <rect x="28" y="29" width="14" height="14" rx="3" fill="#fff" />
    <ChromeDisc x={35} y={36} r={6} />
  </svg>,
  <svg viewBox="0 0 34 44" className="h-11 w-[34px]">
    <path d="M3 6l6-5 5 2 5-3 5 3 6 4v5H3z" fill="#e8e8e8" />
    <path d="M6 5l4 2-3 2zM13 3l3 3-4 1zM22 4l4 2-4 2zM17 6l3 2-4 1z" fill="#2a4c5a" />
    <path d="M10 6l3 1-2 2zM20 3l2 3-3-1z" fill="#c8452e" />
    <path d="M2 8q15 5 30 0l-4 31q-.5 3-11 3T6 39z" fill="#d9d9d8" />
    <path d="M2 8q15 5 30 0" fill="none" stroke="#fff" strokeWidth="1.400" />
    <path d="M8 12l3 28M15 13l2 28M25 12l-3 28M10 20l12 7M8 30l15-6" stroke="#e6e6e5" strokeWidth="1.500" />
  </svg>,
];

function DockItem({ children, dot }: { children: ReactNode; dot?: boolean }) {
  return (
    <div className="flex h-full w-[48.530px] shrink-0 flex-col items-center">
      <div className="flex h-[53px] items-center justify-center">{children}</div>
      {dot && <i className="h-1 w-1 rounded-full bg-[#2d2622]" />}
    </div>
  );
}

function Dock() {
  return (
    <div className="flex h-[60px] w-[1360px] items-center rounded-[18px] border border-white/25 bg-[linear-gradient(90deg,#857a69_0,#9a9381_50px,#979c8e_170px,#a09f94_240px,#cda099_290px,#e6a4a6_360px,#eaa5a9_660px,#dca39f_730px,#b6a797_790px,#aaa693_840px,#bfae9b_930px,#b8ac9a_1000px,#a6a48e_1080px,#a09c87_1200px,#8f8d7c_1300px,#8e8e7f_1360px)] pl-[2px]">
      {apps.map((a, i) => <DockItem key={i} dot={a.dot}>{a.art}</DockItem>)}
      <div className="mr-[10px] ml-[12px] h-11 w-px shrink-0 bg-[#6f6a5c]/70" />
      {recent.map((a, i) => <DockItem key={i} dot={a.dot}>{a.art}</DockItem>)}
      <div className="mr-[10.5px] ml-[10px] h-11 w-px shrink-0 bg-[#6f6a5c]/70" />
      {files.map((f, i) => <DockItem key={i}>{f}</DockItem>)}
    </div>
  );
}

export default function App() {
  return (
    <div className="flex h-[900px] w-[1440px] flex-col overflow-hidden bg-[linear-gradient(90deg,#453a2e_0,#5b4f41_40px,#6d6656_150px,#7c7a6c_280px,#b6817d_330px,#cb8c8f_500px,#c98b8e_640px,#9d9488_690px,#a09d91_900px,#9c9386_1100px,#6f7060_1250px,#44483d_1400px,#2c2b26_1440px)]">
      <Defs />
      <div className="bg-[linear-gradient(90deg,#2a2318,#4a382b,#3b0604)]">
        <MenuBar />
      </div>
      <div className="bg-[linear-gradient(90deg,#2a2018,#3d0a0a)] bg-[length:100%_20px] bg-no-repeat">
        <div className="flex h-[809px] flex-col overflow-hidden rounded-[10px]">
          <TitleBar />
          <Toolbar />
          <div className="flex h-[690px] shrink-0">
            <Sidebar />
            <main className="flex w-[1000px] shrink-0 items-start bg-white pt-3 pl-3 font-['Noto_Sans',sans-serif] whitespace-nowrap">
              <AirlineTable />
              <div className="ml-[115px]"><FilterPanel /></div>
            </main>
            <div className="flex flex-1 justify-end bg-[#f4f4f4]">
              <div className="flex w-[15px] justify-center border-l border-[#e3e3e3] bg-[#fafafa] pt-[3px]">
                <div className="h-[588px] w-2 rounded-full bg-[#7d7d7d]" />
              </div>
            </div>
          </div>
          <SheetTabs />
          <StatusBar />
        </div>
      </div>
      <div className="mt-px ml-10"><Dock /></div>
    </div>
  );
}
